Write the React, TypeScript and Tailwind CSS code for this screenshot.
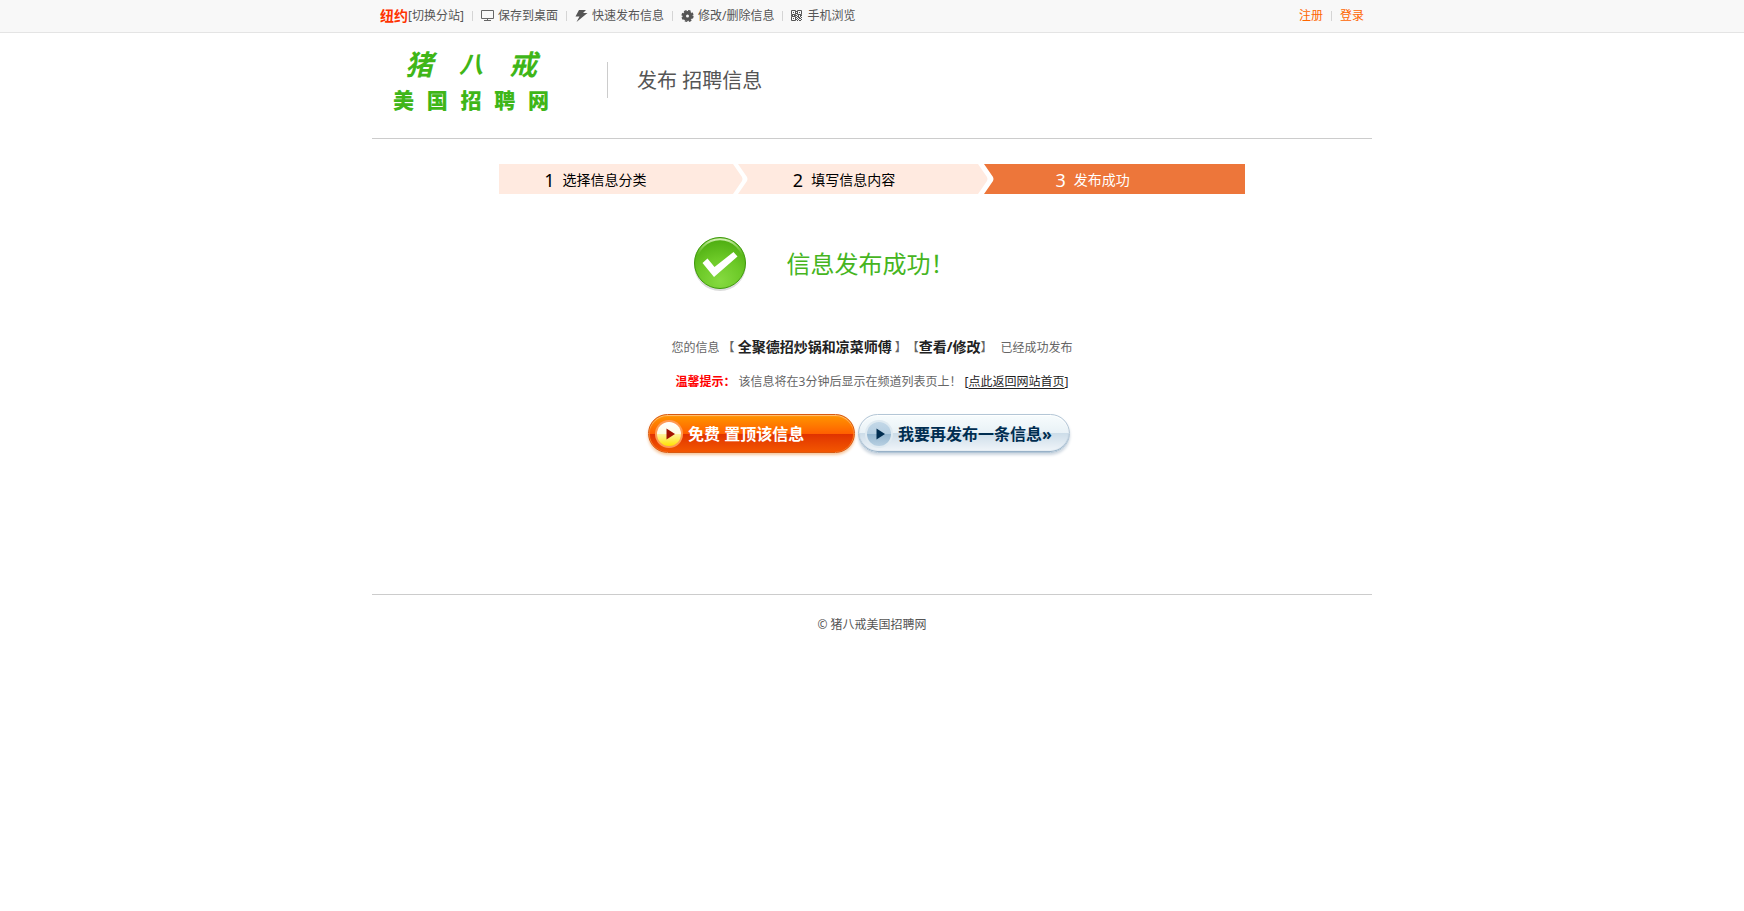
import type { ReactNode } from 'react'

const STEPS = ['选择信息分类', '填写信息内容', '发布成功']

export default function App() {
  return (
    <div className="min-h-screen bg-white font-['Noto_Sans','Noto_Sans_CJK_SC',sans-serif] text-xs text-[#555] [text-spacing-trim:space-all]">
      <TopBar />
      <div className="max-w-[1000px] mx-auto">
        <Header />
        <main className="pt-[25px] pb-[141px]">
          <Steps />
          <Result />
        </main>
        <footer className="border-t border-[#ccc] pt-5 text-center leading-5">© 猪八戒美国招聘网</footer>
      </div>
    </div>
  )
}

function TopBar() {
  return (
    <div className="bg-[#f8f8f8] border-b border-[#e4e4e4]">
      <nav className="max-w-[1000px] h-8 mx-auto px-2 flex items-center justify-between leading-5">
        <div className="flex items-center">
          <strong className="text-sm leading-5 text-[#ff3300]">纽约</strong>
          <a href="#">[切换分站]</a>
          <Divider />
          <TopLink icon={<MonitorIcon />}>保存到桌面</TopLink>
          <Divider />
          <TopLink icon={<BoltIcon />}>快速发布信息</TopLink>
          <Divider />
          <TopLink icon={<GearIcon />}>修改/删除信息</TopLink>
          <Divider />
          <TopLink icon={<QrIcon />}>手机浏览</TopLink>
        </div>
        <div className="flex items-center text-[#ff6600]">
          <a href="#">注册</a>
          <Divider />
          <a href="#">登录</a>
        </div>
      </nav>
    </div>
  )
}

function Divider() {
  return <span className="w-px h-2.5 mx-2 bg-[#d5d5d5]" />
}

function TopLink({ icon, children }: { icon: ReactNode; children: ReactNode }) {
  return (
    <a href="#" className="flex items-center gap-1">
      {icon}
      {children}
    </a>
  )
}

function Header() {
  return (
    <header className="h-[106px] border-b border-[#ccc] flex items-center pb-3">
      <a href="#" className="ml-[21px] w-[156px] pt-1 text-[#3fb618]">
        <span className="flex items-center justify-between px-3 text-[28px] leading-9 font-semibold italic">
          <span>猪</span>
          <span className="text-2xl leading-9">八</span>
          <span>戒</span>
        </span>
        <span className="flex justify-between text-[21px] leading-9 font-black">
          {[...'美国招聘网'].map((c) => <span key={c}>{c}</span>)}
        </span>
      </a>
      <span className="ml-[58px] w-px h-9 bg-[#ccc]" />
      <h1 className="ml-[29px] pt-0.5 text-xl leading-7">发布 招聘信息</h1>
    </header>
  )
}

function Steps() {
  return (
    <ol className="max-w-[746px] mx-auto grid grid-cols-3 text-black">
      {STEPS.map((label, i) => (
        <li key={label}
          className={`relative h-[30px] pt-0.5 pr-14 flex items-center justify-center gap-2 ${i === 2 ? 'bg-[#ed763a] text-white' : 'bg-[#ffeae0]'}`}
        >
          <span className="text-lg leading-6">{i + 1}</span>
          <span className="text-sm leading-5">{label}</span>
          {i === 0 && (
            <svg className="absolute top-0 right-0" width="15" height="30" viewBox="0 0 15 30">
              <path d="M0 0H5L14 13Q15 15 14 17L5 30H0L9 17Q10 15 9 13Z" fill="#fff" />
            </svg>
          )}
          {i === 1 && (
            <svg className="absolute top-0 right-0" width="18" height="30" viewBox="0 0 18 30">
              <path d="M5 0H18V30H5L14 15Z" fill="#ed763a" />
              <path d="M0 0H6L15 13Q16 15 15 17L6 30H0L9 17Q10 15 9 13Z" fill="#fff" />
            </svg>
          )}
        </li>
      ))}
    </ol>
  )
}

function Result() {
  return (
    <section className="pt-[42px] flex flex-col items-center text-[#666]">
      <div className="flex items-center gap-10 pr-[97px]">
        <CheckBadge />
        <h2 className="text-2xl leading-8 text-[#46b51e]">信息发布成功！</h2>
      </div>
      <p className="mt-[43px] leading-6">
        您的信息 【 <a href="#" className="text-sm leading-6 font-bold text-[#222]">全聚德招炒锅和凉菜师傅</a> 】【
        <a href="#" className="text-sm leading-6 font-bold text-[#222]">查看/修改</a>】
        <span className="ml-2">已经成功发布</span>
      </p>
      <p className="mt-2.5 leading-6">
        <strong className="text-[#ff0000]">温馨提示：</strong> 该信息将在3分钟后显示在频道列表页上！{' '}
        <a href="#" className="text-[#222]">[<span className="underline underline-offset-2">点此返回网站首页</span>]</a>
      </p>
      <div className="mt-5 pr-[26px] flex gap-[3px]">
        <button
          className="w-[207px] h-[39px] pl-1.5 flex items-center gap-[5px] rounded-full border border-[#d95a10] bg-linear-to-b from-[#ff9500] via-[#ff6000] via-50% to-[#f04a00] shadow-[inset_0_1px_1px_#ffc27a,inset_0_-1px_1px_#ff9c50,0_2px_3px_#f5c8a0] relative overflow-hidden text-base leading-6 font-bold text-white"
        >
          <span className="absolute inset-x-px top-[19px] h-[18px] bg-linear-to-b from-[#e03200] to-[#f35600] rounded-b-full" />
          <PlayIcon hot />
          <span className="relative">免费 置顶该信息</span>
        </button>
        <button
          className="w-[212px] h-[39px] pl-1.5 flex items-center gap-[5px] rounded-full border border-[#b3c6d6] bg-[linear-gradient(#f7fcfd,#e8f1f6_50%,#cddde9_50%,#f2f6fa)] shadow-[inset_0_1px_1px_#fff,inset_0_-1px_1px_#8eaac2,0_2px_3px_#cbd5df] text-base leading-6 font-bold text-[#002d50]"
        >
          <PlayIcon />
          <span>我要再发布一条信息»</span>
        </button>
      </div>
    </section>
  )
}

function CheckBadge() {
  return (
    <svg width="54" height="56" viewBox="0 0 54 56">
      <defs>
        <radialGradient id="badge" cx="50%" cy="85%" r="80%">
          <stop offset="0" stopColor="#86da40" />
          <stop offset="0.55" stopColor="#6cc927" />
          <stop offset="1" stopColor="#4fae12" />
        </radialGradient>
        <linearGradient id="gloss" x1="0" y1="0" x2="0" y2="1">
          <stop offset="0" stopColor="#d5f2b5" />
          <stop offset="0.35" stopColor="#8fd850" stopOpacity="0" />
        </linearGradient>
      </defs>
      <ellipse cx="27" cy="29" rx="26" ry="26" fill="#999" opacity="0.35" />
      <circle cx="27" cy="27" r="25.5" fill="url(#badge)" stroke="#3f9a0c" />
      <circle cx="27" cy="27" r="23.8" fill="none" stroke="url(#gloss)" strokeWidth="2" />
      <path d="M9.5 27L14.5 22.5L21.5 31L40.5 16L44.5 20.5L21 41Z" fill="#fff" />
    </svg>
  )
}

function PlayIcon({ hot }: { hot?: boolean }) {
  const id = hot ? 'play-hot' : 'play-cool'
  return (
    <svg className="relative shrink-0" width="28" height="28" viewBox="0 0 28 28">
      <defs>
        <linearGradient id={id} x1="0" y1="0" x2="0" y2="1">
          <stop offset="0" stopColor={hot ? '#fff' : '#c3d8e8'} />
          <stop offset="0.5" stopColor={hot ? '#fffbe0' : '#b5cee1'} />
          <stop offset="0.5" stopColor={hot ? '#fff3a0' : '#94b6d0'} />
          <stop offset="1" stopColor={hot ? '#ffe000' : '#b8d0e2'} />
        </linearGradient>
      </defs>
      <circle cx="14" cy="14" r="14" fill={hot ? '#ff9a52' : '#dfeaf1'} />
      <circle cx="14" cy="14" r="12" fill={`url(#${id})`} />
      <path d="M11.5 8.5L20 14L11.5 19.5Z" fill={hot ? '#a31200' : '#002d50'} />
    </svg>
  )
}

function MonitorIcon() {
  return (
    <svg width="13" height="13" viewBox="0 0 13 13" fill="none" stroke="#666">
      <path d="M0.5 0.5H12.5V8.5H0.5ZM6.5 9V10M3 10.5H10" />
    </svg>
  )
}

function BoltIcon() {
  return (
    <svg width="13" height="13" viewBox="0 0 13 13" fill="#555">
      <path d="M4 0H11L8 3H12.5L1.5 12L4.5 6.5H0.5Z" />
    </svg>
  )
}

function GearIcon() {
  return (
    <svg width="13" height="13" viewBox="0 0 13 13">
      <circle cx="6.5" cy="6" r="5.3" fill="none" stroke="#555" strokeWidth="1.6" strokeDasharray="2.6 1.56" />
      <circle cx="6.5" cy="6" r="3.3" fill="none" stroke="#555" strokeWidth="3.6" />
    </svg>
  )
}

// 11x11 module grid
function QrIcon() {
  return (
    <svg width="12" height="13" viewBox="0 0 12 13" fill="none" stroke="#555">
      <path d="M0.5 0.5H4.5V4.5H0.5ZM6.5 0.5H10.5V4.5H6.5ZM0.5 6.5H4.5V10.5H0.5Z" />
      <path d="M2 2.5H3M8 2.5H9M2 8.5H3M5 1.5H6M5 3.5H6M0 5.5H2M3 5.5H6M7 5.5H8M9 5.5H11M6 6.5H8M9 6.5H10M5 7.5H6M7 7.5H9M10 7.5H11M6 8.5H7M8 8.5H10M5 9.5H6M7 9.5H8M10 9.5H11M6 10.5H7M8 10.5H10" />
    </svg>
  )
}
